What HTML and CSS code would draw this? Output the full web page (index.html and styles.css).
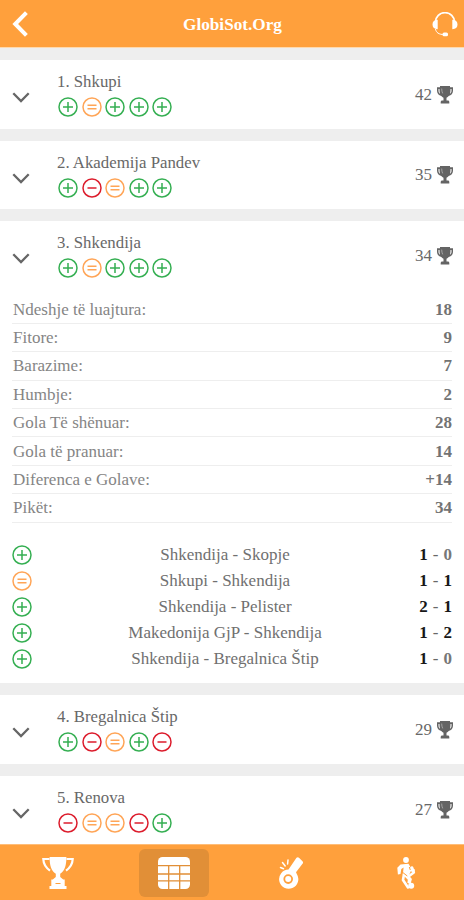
FILE: index.html
```html
<!DOCTYPE html>
<html lang="sq">
<head>
<meta charset="utf-8">
<title>GlobiSot.Org</title>
<link rel="stylesheet" href="styles.css">
</head>
<body>
<svg class="sprites" width="0" height="0" aria-hidden="true">
  <symbol id="win" viewBox="0 0 20 20"><circle cx="10" cy="10" r="9"/><path d="M5 10h10M10 5v10"/></symbol>
  <symbol id="draw" viewBox="0 0 20 20"><circle cx="10" cy="10" r="9"/><path d="M5.500 8.200h9M5.500 11.800h9"/></symbol>
  <symbol id="loss" viewBox="0 0 20 20"><circle cx="10" cy="10" r="9"/><path d="M5.500 10h9"/></symbol>
  <symbol id="chev" viewBox="0 0 18 11"><path d="M1.300 1.300L9 9l7.700-7.700"/></symbol>
  <symbol id="cup" viewBox="0 0 16 18"><path fill-rule="evenodd" d="M3 0h10v1.200h3v3.600c0 2.700-1.800 4.600-4.300 5.200-.6.900-1.300 1.400-2.200 1.800v2.600h1.300c1 0 1.500.7 1.500 1.600v1.500H3.700V16c0-.9.600-1.600 1.500-1.600h1.300v-2.600c-.9-.4-1.600-.9-2.200-1.800C1.800 9.400 0 7.500 0 4.800V1.200h3zM1.500 3v1.800c0 1.300.6 2.300 1.500 2.900C2.600 6.300 2.500 4.800 2.500 3zM14.500 3h-1c0 1.800-.1 3.300-.5 4.700.9-.6 1.500-1.600 1.500-2.900z"/><path class="shine" d="M4.700 2.600c0 1.900.3 3.500 1 4.800"/></symbol>
</svg>
<div class="app">
  <header class="topbar">
    <svg class="back" viewBox="0 0 16 26"><path d="M13 3L3.200 13 13 23"/></svg>
    <h1>GlobiSot.Org</h1>
    <svg class="support" viewBox="0 0 26 25">
      <path class="line" d="M3.500 11V10a9.500 9.300 0 0 1 19 0v1"/>
      <path class="thin" d="M3.500 17c.6 3.600 3.200 5.600 9 5.600"/>
      <path d="M5.700 7.800v9.400C2.300 17.200.5 15.300.5 12.500s1.800-4.700 5.200-4.700zM20.300 7.800v9.400c3.400 0 5.200-1.900 5.200-4.700s-1.800-4.700-5.200-4.700z"/>
      <rect x="10.500" y="20.600" width="5.500" height="3.600" rx="1.500"/>
    </svg>
  </header>
  <main class="table">
    <section class="team">
      <div class="head">
        <svg class="chev"><use href="#chev"/></svg>
        <div class="info"><h2>1. Shkupi</h2><div class="form"><svg class="win"><use href="#win"/></svg><svg class="draw"><use href="#draw"/></svg><svg class="win"><use href="#win"/></svg><svg class="win"><use href="#win"/></svg><svg class="win"><use href="#win"/></svg></div></div>
        <div class="points">42<svg class="cup"><use href="#cup"/></svg></div>
      </div>
    </section>
    <section class="team">
      <div class="head">
        <svg class="chev"><use href="#chev"/></svg>
        <div class="info"><h2>2. Akademija Pandev</h2><div class="form"><svg class="win"><use href="#win"/></svg><svg class="loss"><use href="#loss"/></svg><svg class="draw"><use href="#draw"/></svg><svg class="win"><use href="#win"/></svg><svg class="win"><use href="#win"/></svg></div></div>
        <div class="points">35<svg class="cup"><use href="#cup"/></svg></div>
      </div>
    </section>
    <section class="team open">
      <div class="head">
        <svg class="chev"><use href="#chev"/></svg>
        <div class="info"><h2>3. Shkendija</h2><div class="form"><svg class="win"><use href="#win"/></svg><svg class="draw"><use href="#draw"/></svg><svg class="win"><use href="#win"/></svg><svg class="win"><use href="#win"/></svg><svg class="win"><use href="#win"/></svg></div></div>
        <div class="points">34<svg class="cup"><use href="#cup"/></svg></div>
      </div>
      <dl class="stats">
        <div><dt>Ndeshje të luajtura:</dt><dd>18</dd></div>
        <div><dt>Fitore:</dt><dd>9</dd></div>
        <div><dt>Barazime:</dt><dd>7</dd></div>
        <div><dt>Humbje:</dt><dd>2</dd></div>
        <div><dt>Gola Të shënuar:</dt><dd>28</dd></div>
        <div><dt>Gola të pranuar:</dt><dd>14</dd></div>
        <div><dt>Diferenca e Golave:</dt><dd>+14</dd></div>
        <div><dt>Pikët:</dt><dd>34</dd></div>
      </dl>
      <ul class="matches">
        <li><svg class="win"><use href="#win"/></svg><span>Shkendija - Skopje</span><p><b>1</b> - <b class="dim">0</b></p></li>
        <li><svg class="draw"><use href="#draw"/></svg><span>Shkupi - Shkendija</span><p><b>1</b> - <b>1</b></p></li>
        <li><svg class="win"><use href="#win"/></svg><span>Shkendija - Pelister</span><p><b>2</b> - <b>1</b></p></li>
        <li><svg class="win"><use href="#win"/></svg><span>Makedonija GjP - Shkendija</span><p><b>1</b> - <b>2</b></p></li>
        <li><svg class="win"><use href="#win"/></svg><span>Shkendija - Bregalnica Štip</span><p><b>1</b> - <b class="dim">0</b></p></li>
      </ul>
    </section>
    <section class="team">
      <div class="head">
        <svg class="chev"><use href="#chev"/></svg>
        <div class="info"><h2>4. Bregalnica Štip</h2><div class="form"><svg class="win"><use href="#win"/></svg><svg class="loss"><use href="#loss"/></svg><svg class="draw"><use href="#draw"/></svg><svg class="win"><use href="#win"/></svg><svg class="loss"><use href="#loss"/></svg></div></div>
        <div class="points">29<svg class="cup"><use href="#cup"/></svg></div>
      </div>
    </section>
    <section class="team">
      <div class="head">
        <svg class="chev"><use href="#chev"/></svg>
        <div class="info"><h2>5. Renova</h2><div class="form"><svg class="loss"><use href="#loss"/></svg><svg class="draw"><use href="#draw"/></svg><svg class="draw"><use href="#draw"/></svg><svg class="loss"><use href="#loss"/></svg><svg class="win"><use href="#win"/></svg></div></div>
        <div class="points">27<svg class="cup"><use href="#cup"/></svg></div>
      </div>
    </section>
  </main>
  <nav class="tabs">
    <a><svg viewBox="0 0 32 32">
      <path d="M7.600 0h16.800c0 8-1.400 13.500-6.200 16.800V20l3 2.500h1.500V29h1.800v3h-17v-3h1.800v-6.500h1.500l3-2.500v-3.200C9 13.500 7.600 8 7.600 0z"/>
      <path class="line" d="M7.500 2H1.300c.2 5 2.400 8.600 6.700 11.600M24.500 2h6.200c-.2 5-2.400 8.600-6.700 11.600"/>
      <path class="cut" d="M13.500 26.500h5"/>
    </svg></a>
    <a class="active"><svg viewBox="0 0 32 32">
      <rect width="32" height="32" rx="4.500"/>
      <path class="grid" d="M0 8.700h32M0 17h32M0 23.800h32M10.700 8.700V32M21.700 8.700V32"/>
    </svg></a>
    <a><svg viewBox="0 0 32 32">
      <path fill-rule="evenodd" d="M22.500.8a1.800 1.800 0 0 1 2.500 0l3.500 3.500a1.800 1.800 0 0 1 0 2.500L22 15.300l.8 1.700a9.600 9.600 0 1 1-8.300-4.400zM14.200 17.300a4.800 4.800 0 1 0 0 9.600 4.800 4.800 0 0 0 0-9.600z"/>
      <circle cx="14.200" cy="22.100" r="3"/>
      <path class="rays" d="M6.500 10.500l3 1.300M8.500 5.500l2.700 3.500M14 3l-.4 4"/>
    </svg></a>
    <a><svg viewBox="0 0 32 32">
      <circle cx="16" cy="3" r="2.900"/>
      <path d="M10.500 7.500l8-.8 2.700 4.600 3.800 1.200-.8 3.300-3.500-1.500-1.800 4.200 3 3.500-1.300 5-3.200-1 .4-3.300-5-5 .8-7.200-2.300 1.500-.8 5-2.600.4L7.300 10.800z"/>
      <path class="leg" d="M14 17l-1 6 5 7.500M22 10.500l1.800 5-6 4.500"/>
      <circle cx="21.200" cy="28.800" r="3"/>
      <path class="cut" d="M12.800 15.500l4.500 3.500M19.300 10l1 3"/>
    </svg></a>
  </nav>
</div>
</body>
</html>
```
FILE: styles.css
```css
* { box-sizing: border-box; margin: 0; padding: 0; }
body {
  font-family: "Liberation Serif", "Times New Roman", serif;
  font-size: 17px;
  color: #686868;
  background: #eee;
}
.sprites { display: block; height: 0; }
.app { height: 900px; display: flex; flex-direction: column; overflow: hidden; }
svg { flex: none; }

.topbar {
  flex: none;
  height: 48px;
  padding: 1px 6px 0 12px;
  display: grid;
  grid-template-columns: 26px 1fr 26px;
  align-items: center;
  background: #ffa03c;
  border-bottom: 1px solid #ffd9ad;
  color: #fff;
}
.topbar h1 { font-size: 17.2px; line-height: 20px; text-align: center; padding-top: 1px; padding-right: 5px; }
.back { width: 16px; height: 26px; fill: none; stroke: #fff; stroke-width: 4; stroke-linecap: square; }
.support { width: 26px; height: 25px; fill: #fff; }
.support .line { fill: none; stroke: #fff; stroke-width: 1.8; }
.support .thin { fill: none; stroke: #fff; stroke-width: 1; }

.table { flex: 1; min-height: 0; padding-top: 12px; display: flex; flex-direction: column; gap: 12px; }
.team { flex: none; background: #fff; }
.head { height: 68.5px; padding: 0 11px 0 12px; display: flex; align-items: center; }
.chev { width: 18px; height: 11px; margin: 7px 27px 0 0; fill: none; stroke: #666; stroke-width: 2.3; }
.info { flex: 1; }
.info h2 { font-size: 16.8px; line-height: 20px; font-weight: 400; padding-top: 1px; margin-bottom: 5px; }
.form { display: flex; gap: 3.6px; padding-left: 1px; }
.win, .draw, .loss { width: 20px; height: 20px; display: block; fill: none; stroke-width: 1.5; }
.win { stroke: #35af52; }
.draw { stroke: #ffa557; }
.loss { stroke: #dc1c2c; }
.points { display: flex; align-items: center; gap: 5px; padding-top: 1px; }
.cup { width: 16px; height: 18px; fill: #646464; }
.shine { fill: none; stroke: #aaa; stroke-width: .9; }

.open { height: 462px; }
.stats { margin: 6px 12px 0; }
.stats div {
  height: 28.4px;
  padding: 1px 0 0 1px;
  display: flex;
  justify-content: space-between;
  align-items: center;
  border-bottom: 1px solid #eee;
}
.stats dt { color: #858585; }
.stats dd { font-weight: 700; color: #737373; }

.matches { list-style: none; margin: 19px 12px 0; }
.matches li { height: 26px; display: grid; grid-template-columns: 40px 1fr 54px; align-items: center; }
.matches span { text-align: center; white-space: nowrap; padding-top: 1px; color: #707070; }
.matches p { text-align: right; padding-top: 1px; word-spacing: .8px; }
.matches b { color: #181818; }
.matches .dim { color: #777; }

.tabs {
  flex: none;
  height: 56px;
  padding: 4px 0 3px;
  display: grid;
  grid-template-columns: repeat(4, 1fr);
  justify-items: center;
  background: #ffa03c;
  border-top: 1px solid #ffbd78;
}
.tabs a { width: 70px; height: 48px; border-radius: 6px; display: flex; align-items: center; justify-content: center; }
.tabs .active { background: #e18f37; }
.tabs svg { width: 32px; height: 32px; fill: #fff; }
.tabs .line { fill: none; stroke: #fff; stroke-width: 2.2; }
.tabs .rays { fill: none; stroke: #fff; stroke-width: 1.5; stroke-linecap: round; }
.tabs .leg { fill: none; stroke: #fff; stroke-width: 2.6; stroke-linejoin: round; stroke-linecap: round; }
.tabs .cut { fill: none; stroke: #ffa03c; stroke-width: 1; }
.tabs .grid { fill: none; stroke: #e18f37; stroke-width: 1.3; }
```
